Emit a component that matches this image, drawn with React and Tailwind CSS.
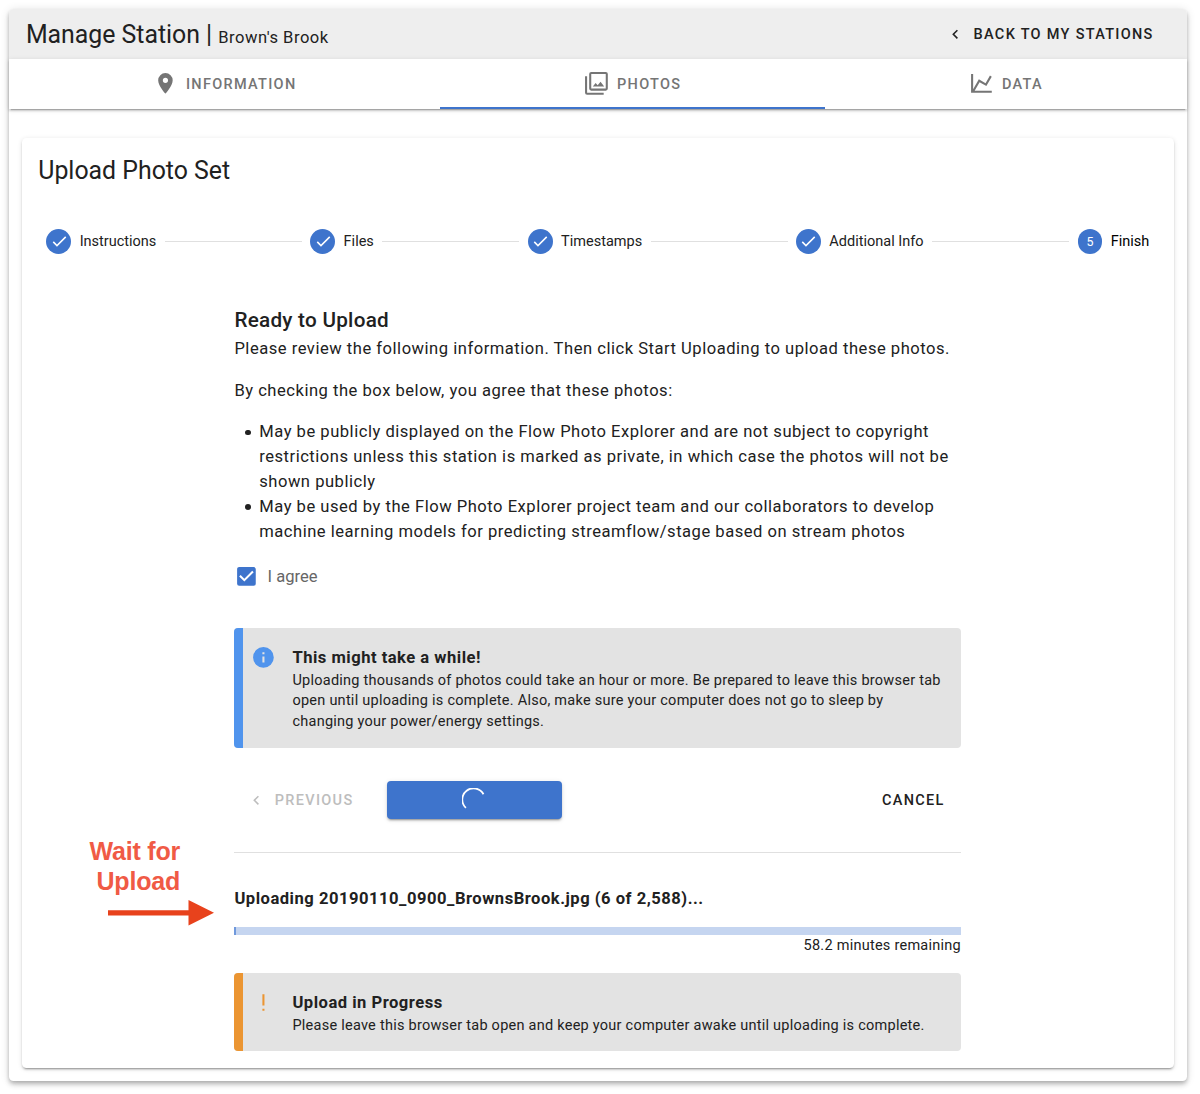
import React from 'react';

const icons = {
  marker: 'M12,11.5A2.5,2.5 0 0,1 9.5,9A2.5,2.5 0 0,1 12,6.5A2.5,2.5 0 0,1 14.5,9A2.5,2.5 0 0,1 12,11.5M12,2A7,7 0 0,0 5,9C5,14.25 12,22 12,22C12,22 19,14.25 19,9A7,7 0 0,0 12,2Z',
  photos: 'M21,17H7V3H21M21,1H7A2,2 0 0,0 5,3V17A2,2 0 0,0 7,19H21A2,2 0 0,0 23,17V3A2,2 0 0,0 21,1M3,5H1V21A2,2 0 0,0 3,23H19V21H3M15.96,10.29L13.21,13.83L11.25,11.47L8.5,15H19.5L15.96,10.29Z',
  chart: 'M16,11.78L20.24,4.45L21.97,5.45L16.74,14.5L10.23,10.75L5.46,19H22V21H2V3H4V17.54L9.5,8L16,11.78Z',
  chevron: 'M15.41,16.58L10.83,12L15.41,7.41L14,6L8,12L14,18L15.41,16.58Z',
  check: 'M21,7L9,19L3.5,13.5L4.91,12.09L9,16.17L19.59,5.59L21,7Z',
  checkbox: 'M10,17L5,12L6.41,10.58L10,14.17L17.59,6.58L19,8M19,3H5C3.89,3 3,3.89 3,5V19A2,2 0 0,0 5,21H19A2,2 0 0,0 21,19V5C21,3.89 20.1,3 19,3Z',
  info: 'M13,9H11V7H13M13,17H11V11H13M12,2A10,10 0 0,0 2,12A10,10 0 0,0 12,22A10,10 0 0,0 22,12A10,10 0 0,0 12,2Z',
  exclamation: 'M11,4H13V15H11V4ZM13,18V20H11V18H13Z',
};

function Icon({ name, className }) {
  return (
    <svg viewBox="0 0 24 24" fill="currentColor" className={`shrink-0 ${className}`}>
      <path d={icons[name]} />
    </svg>
  );
}

function Tab({ icon, label, className }) {
  return (
    <button className={`flex h-full items-center justify-center text-[14.5px] font-medium tracking-[1.3px] text-[#757575] ${className}`}>
      <Icon name={icon} className="mr-2 size-[24.86px]" />
      <span className="pt-[2px]">{label}</span>
    </button>
  );
}

function Step({ label, number }) {
  return (
    <div className={`flex items-center gap-[8.3px] ${number ? 'text-black' : 'text-[#212121]'}`}>
      <span className="flex size-[24.86px] items-center justify-center rounded-full bg-[#3e74cc] text-[12.4px] text-white">
        {number || <Icon name="check" className="size-[18.6px]" />}
      </span>
      <span>{label}</span>
    </div>
  );
}

function Alert({ icon, title, children, barClass, iconClass, className }) {
  return (
    <div className={`flex overflow-hidden rounded bg-[#e3e3e3] ${className}`}>
      <div className={`w-[8.3px] shrink-0 ${barClass}`} />
      <Icon name={icon} className={`mt-[16.8px] ml-[8.5px] size-[24.86px] ${iconClass}`} />
      <div className="ml-[16.4px] pt-[18px] pr-[16px]">
        <div className="text-[16.57px] leading-[24.86px] font-bold tracking-[0.5px]">{title}</div>
        <div className="text-[14.5px] leading-[20.7px] tracking-[0.25px]">{children}</div>
      </div>
    </div>
  );
}

const steps = ['Instructions', 'Files', 'Timestamps', 'Additional Info'];

const terms = [
  'May be publicly displayed on the Flow Photo Explorer and are not subject to copyright restrictions unless this station is marked as private, in which case the photos will not be shown publicly',
  'May be used by the Flow Photo Explorer project team and our collaborators to develop machine learning models for predicting streamflow/stage based on stream photos',
];

export default function App() {
  return (
    <div className="relative h-[1094px] w-[1200px] overflow-hidden bg-white px-[9.3px] pt-[9px] pr-[13.3px] font-[Roboto,sans-serif] text-[#212121]">
      <div className="h-[1071.5px] rounded-[4.5px] bg-white shadow-[0_2px_4px_-1px_rgba(0,0,0,0.2),0_4px_5px_0_rgba(0,0,0,0.14),0_1px_10px_0_rgba(0,0,0,0.12)]">
        <header className="flex h-[50px] items-center justify-between rounded-t-[4.5px] bg-[#eeeeee] pr-[33px] pl-[16.6px]">
          <h1 className="pt-[3px] text-[24.86px] leading-[47px] tracking-[-0.02px]">
            Manage Station | <span className="text-[16.57px] tracking-[0.5px]">Brown's Brook</span>
          </h1>
          <button className="flex items-center text-[14.5px] font-medium tracking-[1.3px]">
            <Icon name="chevron" className="mr-[9.3px] size-[18.6px]" />
            <span className="pt-[2px]">BACK TO MY STATIONS</span>
          </button>
        </header>

        <nav className="flex h-[49.7px] bg-white shadow-[0_3px_1px_-2px_rgba(0,0,0,0.2),0_2px_2px_0_rgba(0,0,0,0.14),0_1px_5px_0_rgba(0,0,0,0.12)]">
          <Tab icon="marker" label="INFORMATION" className="w-[431px]" />
          <Tab icon="photos" label="PHOTOS" className="w-[385px] border-b-2 border-[#3e74cc] pt-0.5" />
          <Tab icon="chart" label="DATA" className="flex-1" />
        </nav>

        <main className="mx-[12.4px] mt-[29px] h-[930.5px] rounded-[4.5px] bg-white pt-4 shadow-[0_3px_1px_-2px_rgba(0,0,0,0.2),0_2px_2px_0_rgba(0,0,0,0.14),0_1px_5px_0_rgba(0,0,0,0.12)]">
          <h2 className="ml-[16.6px] text-[24.86px] leading-[34px]">Upload Photo Set</h2>

          <div className="mt-[41.1px] flex items-center gap-[8.5px] pr-[25px] pl-[24.8px] text-[14.5px] leading-[25px]">
            {steps.map((label) => (
              <React.Fragment key={label}>
                <Step label={label} />
                <div className="h-px flex-1 bg-[#e0e0e0]" />
              </React.Fragment>
            ))}
            <Step label="Finish" number="5" />
          </div>

          <div className="mt-[48.9px] ml-[212.7px] w-[726.6px] text-[16.57px] leading-[24.86px] tracking-[0.515px]">
            <h3 className="text-[20.7px] leading-[34.5px] font-medium tracking-[0.26px]">Ready to Upload</h3>
            <p>Please review the following information. Then click Start Uploading to upload these photos.</p>
            <p className="mt-[16.6px]">By checking the box below, you agree that these photos:</p>
            <ul className="mt-[16.6px]">
              {terms.map((term) => (
                <li key={term} className="flex">
                  <span className="mt-[9.8px] mr-[8.7px] ml-[10.8px] size-[5.4px] shrink-0 rounded-full bg-[#212121]" />
                  <span>{term}</span>
                </li>
              ))}
            </ul>
            <label className="mt-[19.3px] flex items-center tracking-normal text-[#666666]">
              <Icon name="checkbox" className="mr-[8.3px] size-[24.86px] text-[#3e74cc]" />
              <span className="pt-[1.5px]">I agree</span>
            </label>

            <Alert icon="info" title="This might take a while!" barClass="bg-[#5094ed]" iconClass="text-[#5094ed]" className="mt-[37.8px] h-[120px]">
              Uploading thousands of photos could take an hour or more. Be prepared to leave this browser tab open until uploading is complete. Also, make sure your computer does not go to sleep by changing your power/energy settings.
            </Alert>

            <div className="mt-[33.5px] flex h-[37.8px] items-center text-[14.5px] font-medium tracking-[1.3px]">
              <button className="ml-[12.5px] flex items-center text-[#bdbdbd]">
                <Icon name="chevron" className="mr-[9.3px] size-[18.6px]" />
                <span className="pt-[2.5px]">PREVIOUS</span>
              </button>
              <button className="ml-[33.3px] flex h-full w-[175px] items-center justify-center rounded bg-[#3e74cc] shadow-[0_3px_1px_-2px_rgba(0,0,0,0.2),0_2px_2px_0_rgba(0,0,0,0.14),0_1px_5px_0_rgba(0,0,0,0.12)]">
                <svg viewBox="0 0 24 24" className="size-6" fill="none" stroke="white" strokeWidth="1.8">
                  <path d="M3.9 19.9A11.3 11.3 0 1 1 21.5 6.2" />
                </svg>
              </button>
              <button className="mr-[16.3px] ml-auto pt-[2.5px]">CANCEL</button>
            </div>

            <hr className="mt-[33px] border-t border-[#e0e0e0]" />
            <div className="mt-[34px] font-bold">Uploading 20190110_0900_BrownsBrook.jpg (6 of 2,588)...</div>
            <div className="mt-[15px] h-[8.3px] bg-[#c5d5f0]">
              <div className="h-full w-[1.7px] bg-[#7099dc]" />
            </div>
            <div className="pt-[1.1px] text-right text-[14.5px] leading-[20.7px] tracking-[0.25px]">58.2 minutes remaining</div>
            <Alert icon="exclamation" title="Upload in Progress" barClass="bg-[#eb9532]" iconClass="text-[#eb9532]" className="mt-[15.9px] h-[78.1px]">
              Please leave this browser tab open and keep your computer awake until uploading is complete.
            </Alert>
          </div>
        </main>
      </div>

      <div className="absolute top-[836px] left-[80px] w-[140px]">
        <div className="w-[100px] text-right font-['Liberation_Sans',sans-serif] text-[25px] leading-[30px] font-bold tracking-[-0.2px] whitespace-nowrap text-[#f05a45]">
          Wait for
          <br />
          Upload
        </div>
        <svg viewBox="0 0 106 26" className="ml-7 h-[26px] w-[106px] translate-y-[4px] fill-[#e8421c]">
          <path d="M0 10.2H80.5V0L106 12.8L80.5 25.5V15.6H0Z" />
        </svg>
      </div>
    </div>
  );
}
